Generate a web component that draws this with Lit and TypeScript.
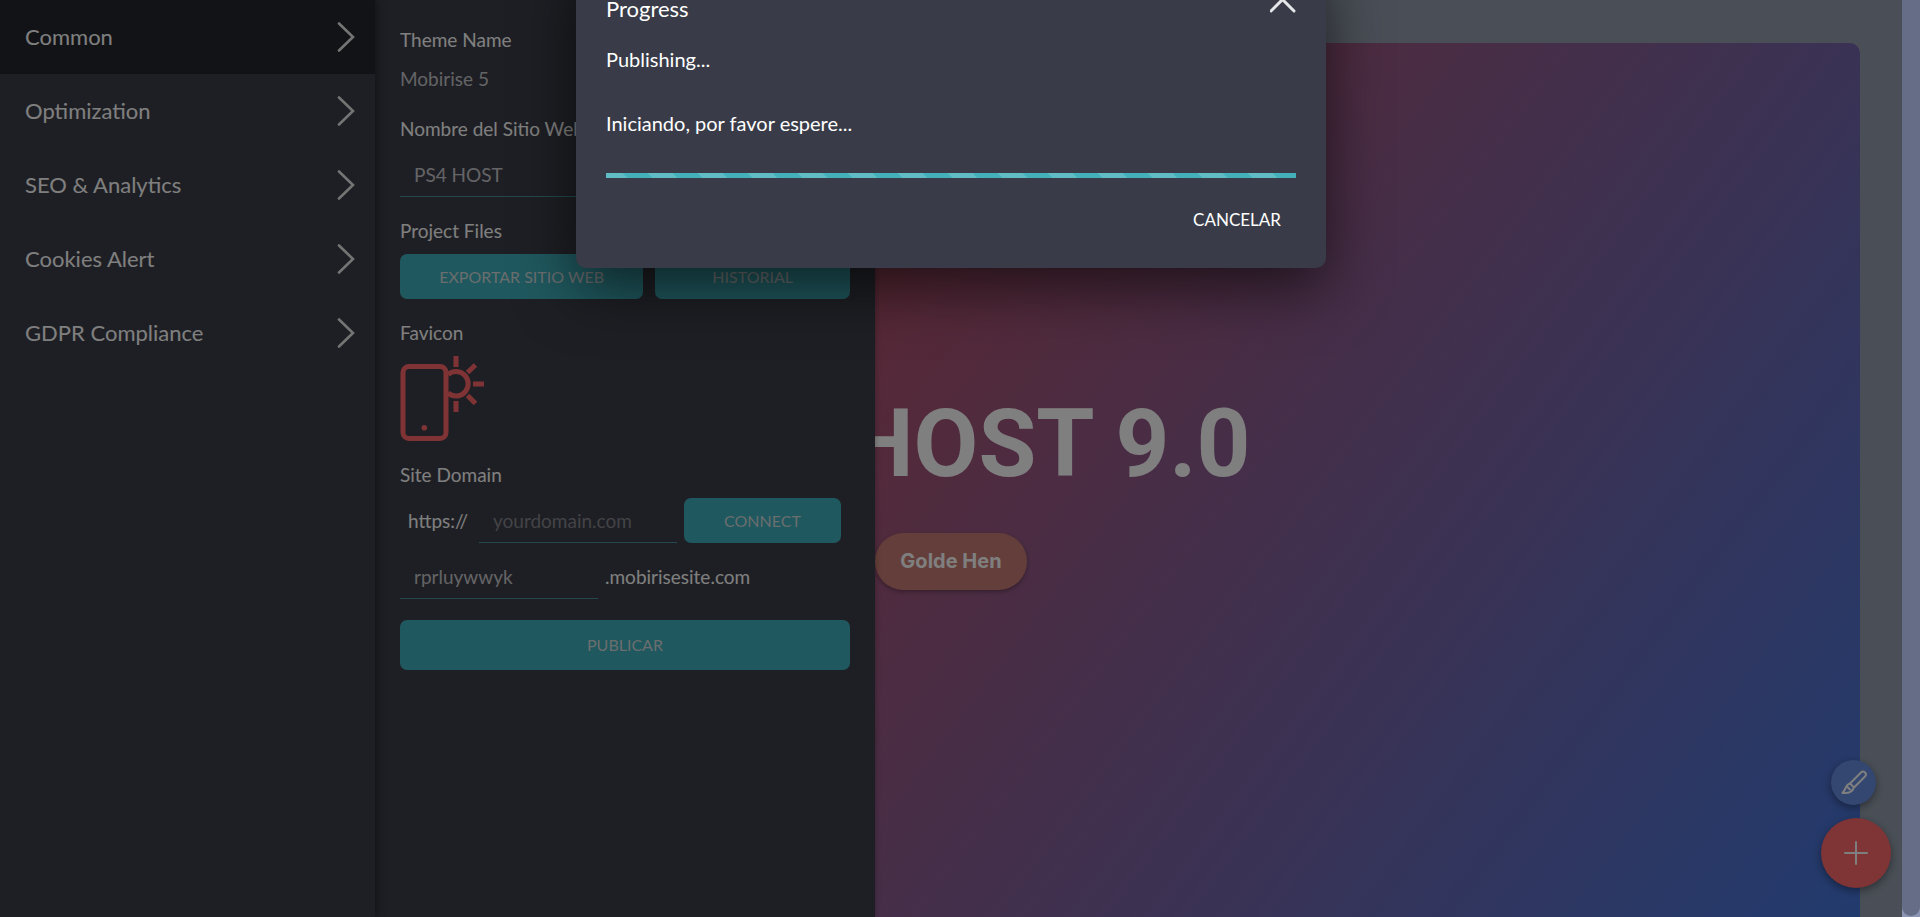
import { LitElement, html, css, svg } from "lit";
import { customElement, property, state } from "lit/decorators.js";
import { classMap } from "lit/directives/class-map.js";

const SECTIONS = ["Common", "Optimization", "SEO & Analytics", "Cookies Alert", "GDPR Compliance"];

const sharedStyles = css`
  *,
  *::before,
  *::after {
    box-sizing: border-box;
  }
  button,
  input {
    margin: 0;
    border: 0;
    padding: 0;
    background: none;
    color: inherit;
    font: inherit;
  }
  button {
    cursor: pointer;
  }
`;

@customElement("settings-nav")
export class SettingsNav extends LitElement {
  @state() private active = 0;

  static styles = [
    sharedStyles,
    css`
      :host {
        display: block;
        background: #3c3e48;
      }
      .item {
        display: flex;
        align-items: center;
        justify-content: space-between;
        width: 100%;
        height: 74px;
        padding: 0 20px 0 25px;
        color: #fff;
        font-size: 22px;
        line-height: 28px;
        text-align: left;
      }
      .active {
        background: #25272d;
      }
      .chevron {
        width: 18px;
        height: 30px;
        fill: none;
        stroke: #e8e8e8;
        stroke-width: 2.6;
        stroke-linecap: round;
      }
    `,
  ];

  render() {
    return html`<nav>
      ${SECTIONS.map(
        (name, i) => html`<button
          class=${classMap({ item: true, active: i === this.active })}
          @click=${() => (this.active = i)}
        >
          <span>${name}</span>
          <svg class="chevron" viewBox="0 0 18 30" aria-hidden="true"><path d="M2 1.5 16 15 2 28.5" /></svg>
        </button>`
      )}
    </nav>`;
  }
}

@customElement("site-settings")
export class SiteSettings extends LitElement {
  static styles = [
    sharedStyles,
    css`
      :host {
        display: block;
        padding: 27px 25px;
        background: #3c3e48;
        color: #fff;
        font-size: 19px;
        line-height: 26px;
      }
      .form {
        display: flex;
        flex-direction: column;
        gap: 21px;
      }
      .field {
        display: flex;
        flex-direction: column;
        gap: 10px;
      }
      .value {
        color: #c8c8cc;
        line-height: 32px;
      }
      .input {
        width: 100%;
        height: 45px;
        padding: 0 14px;
        border-bottom: 1px solid #46929c;
        color: #c8c8cc;
        outline: none;
      }
      .input::placeholder {
        color: #86878e;
        opacity: 1;
      }
      .short {
        width: 198px;
      }
      .files {
        display: grid;
        grid-template-columns: 5fr 4fr;
        gap: 12px;
      }
      .button {
        height: 45px;
        border-radius: 7px;
        background: #3eb0bc;
        color: #d4dcde;
        font-size: 16px;
      }
      .connect {
        width: 157px;
      }
      .publish {
        width: 100%;
        height: 50px;
      }
      .favicon {
        display: block;
        width: 84px;
        height: 85px;
        fill: none;
        stroke: #ff6668;
        stroke-width: 5;
      }
      .dot {
        fill: #ff6668;
        stroke: none;
      }
      .rows {
        display: flex;
        flex-direction: column;
        gap: 11px;
      }
      .row {
        display: flex;
        align-items: center;
        gap: 7px;
      }
      .protocol {
        width: 72px;
        padding-left: 8px;
      }
    `,
  ];

  render() {
    return html`<div class="form">
      <div class="field">
        <span>Theme Name</span>
        <span class="value">Mobirise 5</span>
      </div>
      <div class="field">
        <label for="site">Nombre del Sitio Web</label>
        <input id="site" class="input" type="text" value="PS4 HOST" />
      </div>
      <div class="field">
        <span>Project Files</span>
        <div class="files">
          <button class="button">EXPORTAR SITIO WEB</button>
          <button class="button">HISTORIAL</button>
        </div>
      </div>
      <div class="field">
        <span>Favicon</span>
        <svg class="favicon" viewBox="0 0 84 85" role="img" aria-label="Favicon">
          <rect x="3" y="10.5" width="43" height="72" rx="6" />
          <path d="M48 18.5A12.2 12.2 0 1 1 48 37" />
          <path d="M56 0v11M56 45v11M73 28h11M67.5 16.5l8-7.5M67.5 39.500l8 8" />
          <circle class="dot" cx="24.300" cy="71.700" r="2.800" />
        </svg>
      </div>
      <div class="field">
        <label for="domain">Site Domain</label>
        <div class="rows">
          <div class="row">
            <span class="protocol">https://</span>
            <input id="domain" class="input short" type="text" placeholder="yourdomain.com" />
            <button class="button connect">CONNECT</button>
          </div>
          <div class="row">
            <input id="subdomain" class="input short" type="text" value="rprluywwyk" />
            <label for="subdomain">.mobirisesite.com</label>
          </div>
        </div>
      </div>
      <button class="button publish">PUBLICAR</button>
    </div>`;
  }
}

@customElement("site-preview")
export class SitePreview extends LitElement {
  static styles = [
    sharedStyles,
    css`
      :host {
        display: flex;
        flex-direction: column;
        padding: 43px 42px 0;
        background: #949fae;
      }
      .hero {
        flex: 1;
        display: flex;
        flex-direction: column;
        align-items: center;
        justify-content: center;
        gap: 33px;
        padding-top: 17px;
        border-radius: 10px 10px 0 0;
        background: linear-gradient(127deg, #fa361e, #4476dc);
      }
      .title {
        margin: 0;
        color: #fff;
        font: 700 94px/112px Roboto, sans-serif;
      }
      .cta {
        display: flex;
        align-items: center;
        height: 57px;
        padding: 0 25px;
        border-radius: 29px;
        background: #c87c74;
        box-shadow: 0 2px 4px rgba(0, 0, 0, 0.3);
        color: #fff;
        font: 700 20px/28px Inter, sans-serif;
        text-decoration: none;
      }
    `,
  ];

  render() {
    return html`<section class="hero">
      <h1 class="title">PS4 HOST 9.0</h1>
      <a class="cta" href="#">Golde Hen</a>
    </section>`;
  }
}

@customElement("progress-dialog")
export class ProgressDialog extends LitElement {
  @property() heading = "";
  @property() message = "";
  @property() status = "";

  static styles = [
    sharedStyles,
    css`
      :host {
        display: block;
        width: 750px;
        max-width: 100%;
        padding: 30px 30px 26px;
        border-radius: 10px;
        background: #393c48;
        box-shadow: 0 20px 60px rgba(0, 0, 0, 0.6);
        color: #fff;
        font-size: 20px;
        line-height: 26px;
      }
      .head {
        display: flex;
        align-items: flex-start;
        justify-content: space-between;
      }
      .heading {
        margin: 0;
        padding-top: 12px;
        font-size: 22px;
        font-weight: 400;
        line-height: 20px;
      }
      .close {
        width: 26px;
        height: 26px;
      }
      .cross {
        display: block;
        fill: none;
        stroke: #e4e6e8;
        stroke-width: 3;
        stroke-linecap: round;
      }
      .message {
        margin: 27px 0 0;
      }
      .status {
        margin: 38px 0 0;
      }
      .bar {
        height: 5px;
        margin-top: 37px;
        background: linear-gradient(
            45deg,
            rgba(255, 255, 255, 0.15) 25%,
            transparent 25% 50%,
            rgba(255, 255, 255, 0.15) 50% 75%,
            transparent 75%
          ) -8px 0 / 50px 50px #43b0ba;
      }
      .actions {
        display: flex;
        justify-content: flex-end;
        margin-top: 19px;
      }
      .cancel {
        height: 45px;
        padding: 0 15px;
        font-size: 17px;
      }
    `,
  ];

  render() {
    return html`
      <div class="head">
        <h2 class="heading">${this.heading}</h2>
        <button class="close" aria-label="Cerrar">
          <svg class="cross" width="26" height="26" viewBox="0 0 26 26"><path d="M1 1 24 24M24 1 1 24" /></svg>
        </button>
      </div>
      <p class="message">${this.message}</p>
      <p class="status">${this.status}</p>
      <div class="bar" role="progressbar" aria-label=${this.heading}></div>
      <div class="actions"><button class="cancel">CANCELAR</button></div>
    `;
  }
}

@customElement("app-root")
export class AppRoot extends LitElement {
  static styles = [
    sharedStyles,
    css`
      :host {
        display: flex;
        position: relative;
        height: 100vh;
        overflow: hidden;
        font-family: Lato, sans-serif;
      }
      .stage {
        position: relative;
        flex: 1;
        display: flex;
      }
      .preview {
        flex: 1;
      }
      .panels {
        position: absolute;
        inset: 0 auto 0 0;
        isolation: isolate;
        display: grid;
        grid-template-columns: 375px 500px;
        box-shadow: 0 0 6px rgba(0, 0, 0, 0.3);
      }
      .nav {
        z-index: 1;
        box-shadow: 2px 0 8px rgba(0, 0, 0, 0.4);
      }
      .fabs {
        position: absolute;
        right: 11px;
        bottom: 29px;
        display: flex;
        flex-direction: column;
        align-items: flex-end;
        gap: 13px;
      }
      .fab {
        display: grid;
        place-items: center;
        width: 70px;
        height: 70px;
        border-radius: 50%;
        background: #ff686a;
        box-shadow: 0 3px 8px rgba(0, 0, 0, 0.4);
      }
      .small {
        width: 45px;
        height: 45px;
        margin-right: 15px;
        background: #668ee0;
      }
      .glyph {
        fill: none;
        stroke: #fff;
        stroke-width: 2;
        stroke-linecap: round;
        stroke-linejoin: round;
      }
      .shade {
        position: absolute;
        inset: 0;
        background: rgba(0, 0, 0, 0.5);
      }
      .dialog-layer {
        position: absolute;
        inset: -43px 0 auto;
        display: flex;
        justify-content: center;
      }
      .scrollbar {
        width: 18px;
        background: #8c96b4;
      }
      .thumb {
        height: calc(100% - 1px);
        border-radius: 0 0 9px 9px;
        background: #666d87;
      }
    `,
  ];

  render() {
    const plus = svg`<path d="M12 1v22M1 12h22" />`;
    const brush = svg`<path d="M10 14.500 21 3.500a2.600 2.600 0 0 1 4 4L14 18.500M10 14.500l4 4M10 14.500c-4 .5-3.500 5-7.500 9.500 5.500.5 10-1 11.500-5.500M8 18.500l2 2" />`;
    return html`
      <div class="stage">
        <site-preview class="preview"></site-preview>
        <div class="panels">
          <settings-nav class="nav"></settings-nav>
          <site-settings></site-settings>
        </div>
        <div class="fabs">
          <button class="fab small" aria-label="Estilos">
            <svg class="glyph" width="28" height="28" viewBox="0 0 28 28">${brush}</svg>
          </button>
          <button class="fab" aria-label="Agregar">
            <svg class="glyph" width="24" height="24" viewBox="0 0 24 24">${plus}</svg>
          </button>
        </div>
        <div class="shade"></div>
        <div class="dialog-layer">
          <progress-dialog
            role="dialog"
            heading="Progress"
            message="Publishing..."
            status="Iniciando, por favor espere..."
          ></progress-dialog>
        </div>
      </div>
      <div class="scrollbar"><div class="thumb"></div></div>
    `;
  }
}
